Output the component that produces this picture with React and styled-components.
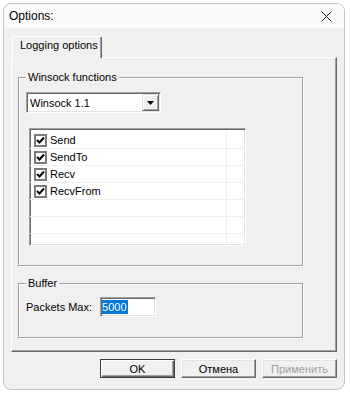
import React from "react";
import styled, { createGlobalStyle, css } from "styled-components";

const Global = createGlobalStyle`
  html, body { margin: 0; padding: 0; background: #ffffff; }
  body { font-family: "Liberation Sans", Arial, sans-serif; font-size: 11px; color: #000; }
  * { box-sizing: border-box; }
`;

const sunken = css`
  border-style: solid;
  border-width: 1px;
  border-color: #a0a0a0 #ffffff #ffffff #a0a0a0;
  box-shadow: inset 1px 1px 0 #696969, inset -1px -1px 0 #e3e3e3;
`;

const Screen = styled.div`
  width: 350px;
  height: 394px;
  padding: 3px 0 0 3px;
`;

const Window = styled.div`
  width: 342px;
  height: 387px;
  border: 1px solid #c4c4c4;
  border-radius: 8px;
  background: #f0f0f0;
  overflow: hidden;
  display: flex;
  flex-direction: column;
`;

const TitleBar = styled.div`
  height: 24px;
  flex: none;
  display: flex;
  align-items: center;
  justify-content: space-between;
  padding: 0 12px 0 5px;
  background: #fafafa;
  font-size: 12px;
`;

const Body = styled.div`
  display: flex;
  flex-direction: column;
  padding: 8px 7px 0 7px;
`;

const TabStrip = styled.div`
  display: flex;
  height: 21px;
  padding-left: 1px;
  position: relative;
  z-index: 1;
`;

const Tab = styled.div`
  width: 90px;
  height: 22px;
  padding: 1px 0 0 7px;
  line-height: 14px;
  background: #f0f0f0;
  border-top: 1px solid #ffffff;
  border-left: 1px solid #ffffff;
  border-right: 1px solid #696969;
  box-shadow: inset -1px 0 0 #a0a0a0;
  border-top-right-radius: 2px;
  border-top-left-radius: 2px;
`;

const Panel = styled.div`
  height: 295px;
  border-top: 1px solid #ffffff;
  border-left: 1px solid #ffffff;
  border-right: 1px solid #696969;
  border-bottom: 1px solid #696969;
  box-shadow: inset -1px -1px 0 #a0a0a0;
  padding: 19px 0 0 6px;
`;

const GroupBox = styled.div`
  position: relative;
  width: 285px;
  height: ${(p) => p.$h}px;
  margin-top: ${(p) => p.$mt || 0}px;
  padding: ${(p) => p.$pt}px 0 0 7px;
  border: 1px solid #a0a0a0;
  box-shadow: inset 1px 1px 0 #ffffff, 1px 1px 0 #ffffff;
`;

const Legend = styled.span`
  position: absolute;
  top: -7px;
  left: 7px;
  padding: 0 2px;
  line-height: 13px;
  background: #f0f0f0;
`;

const Combo = styled.div`
  ${sunken};
  width: 135px;
  height: 21px;
  background: #fff;
  display: flex;
  align-items: center;
  justify-content: space-between;
  padding: 1px 1px 1px 3px;
`;

const DropButton = styled.div`
  width: 17px;
  height: 17px;
  display: flex;
  align-items: center;
  justify-content: center;
  background: #f0f0f0;
  border-style: solid;
  border-width: 1px;
  border-color: #e3e3e3 #696969 #696969 #e3e3e3;
  box-shadow: inset 1px 1px 0 #ffffff, inset -1px -1px 0 #a0a0a0;
`;

const List = styled.div`
  ${sunken};
  width: 217px;
  height: 118px;
  margin: 15px 0 0 3px;
  padding-top: 3px;
  background: #fff;
  overflow: hidden;
`;

const Row = styled.div`
  display: grid;
  grid-template-columns: 197px 1fr;
  height: 17px;
  border-bottom: 1px solid #efefef;
`;

const Cell = styled.div`
  display: flex;
  align-items: center;
  gap: 3px;
  padding-left: 4px;
  border-right: 1px solid #efefef;
`;

const CheckBox = styled.span`
  width: 13px;
  height: 13px;
  flex: none;
  display: flex;
  align-items: center;
  justify-content: center;
  background: #fff;
  border: 2px solid #7a7a7a;
`;

const FieldRow = styled.div`
  display: flex;
  align-items: center;
  gap: 8px;
`;

const Input = styled.div`
  ${sunken};
  width: 56px;
  height: 20px;
  background: #fff;
  padding: 2px 0 0 1px;
`;

const Selected = styled.span`
  display: inline-block;
  background: #0078d7;
  color: #fff;
  line-height: 14px;
  padding-right: 1px;
`;

const ButtonRow = styled.div`
  display: flex;
  justify-content: flex-end;
  gap: 6px;
  margin-top: 7px;
`;

const Button = styled.div`
  width: 75px;
  height: 19px;
  display: flex;
  align-items: center;
  justify-content: center;
  background: #f0f0f0;
  color: ${(p) => (p.$disabled ? "#a0a0a0" : "#000")};
  border-style: solid;
  border-width: 1px;
  ${(p) =>
    p.$default
      ? css`
          border-color: #3c3c3c;
          box-shadow: inset 1px 1px 0 #ffffff, inset -1px -1px 0 #696969, inset -2px -2px 0 #a0a0a0;
        `
      : css`
          border-color: #ffffff #696969 #696969 #ffffff;
          box-shadow: inset -1px -1px 0 #a0a0a0, inset 1px 1px 0 #e3e3e3;
        `}
`;

const CloseIcon = () => (
  <svg width="11" height="11" viewBox="0 0 11 11">
    <path d="M0.5 0.5 L10.5 10.5 M10.5 0.5 L0.5 10.5" stroke="#1a1a1a" strokeWidth="1" />
  </svg>
);

const Arrow = () => (
  <svg width="7" height="4" viewBox="0 0 7 4">
    <polygon points="0,0 7,0 3.5,4" fill="#000" />
  </svg>
);

const Check = () => (
  <svg width="9" height="9" viewBox="0 0 9 9">
    <path d="M1 4 L3.5 6.5 L8 1.5" stroke="#000" strokeWidth="2" fill="none" />
  </svg>
);

const items = ["Send", "SendTo", "Recv", "RecvFrom", "", "", ""];

export default function App() {
  return (
    <Screen>
      <Global />
      <Window>
        <TitleBar>
          <span>Options:</span>
          <CloseIcon />
        </TitleBar>
        <Body>
          <TabStrip>
            <Tab>Logging options</Tab>
          </TabStrip>
          <Panel>
            <GroupBox $h={189} $pt={14}>
              <Legend>Winsock functions</Legend>
              <Combo>
                <span>Winsock 1.1</span>
                <DropButton>
                  <Arrow />
                </DropButton>
              </Combo>
              <List>
                {items.map((name, i) => (
                  <Row key={i}>
                    <Cell>
                      {name && (
                        <>
                          <CheckBox>
                            <Check />
                          </CheckBox>
                          <span>{name}</span>
                        </>
                      )}
                    </Cell>
                    <div />
                  </Row>
                ))}
              </List>
            </GroupBox>
            <GroupBox $h={55} $pt={13} $mt={17}>
              <Legend>Buffer</Legend>
              <FieldRow>
                <span>Packets Max:</span>
                <Input>
                  <Selected>5000</Selected>
                </Input>
              </FieldRow>
            </GroupBox>
          </Panel>
          <ButtonRow>
            <Button $default>OK</Button>
            <Button>Отмена</Button>
            <Button $disabled>Применить</Button>
          </ButtonRow>
        </Body>
      </Window>
    </Screen>
  );
}
